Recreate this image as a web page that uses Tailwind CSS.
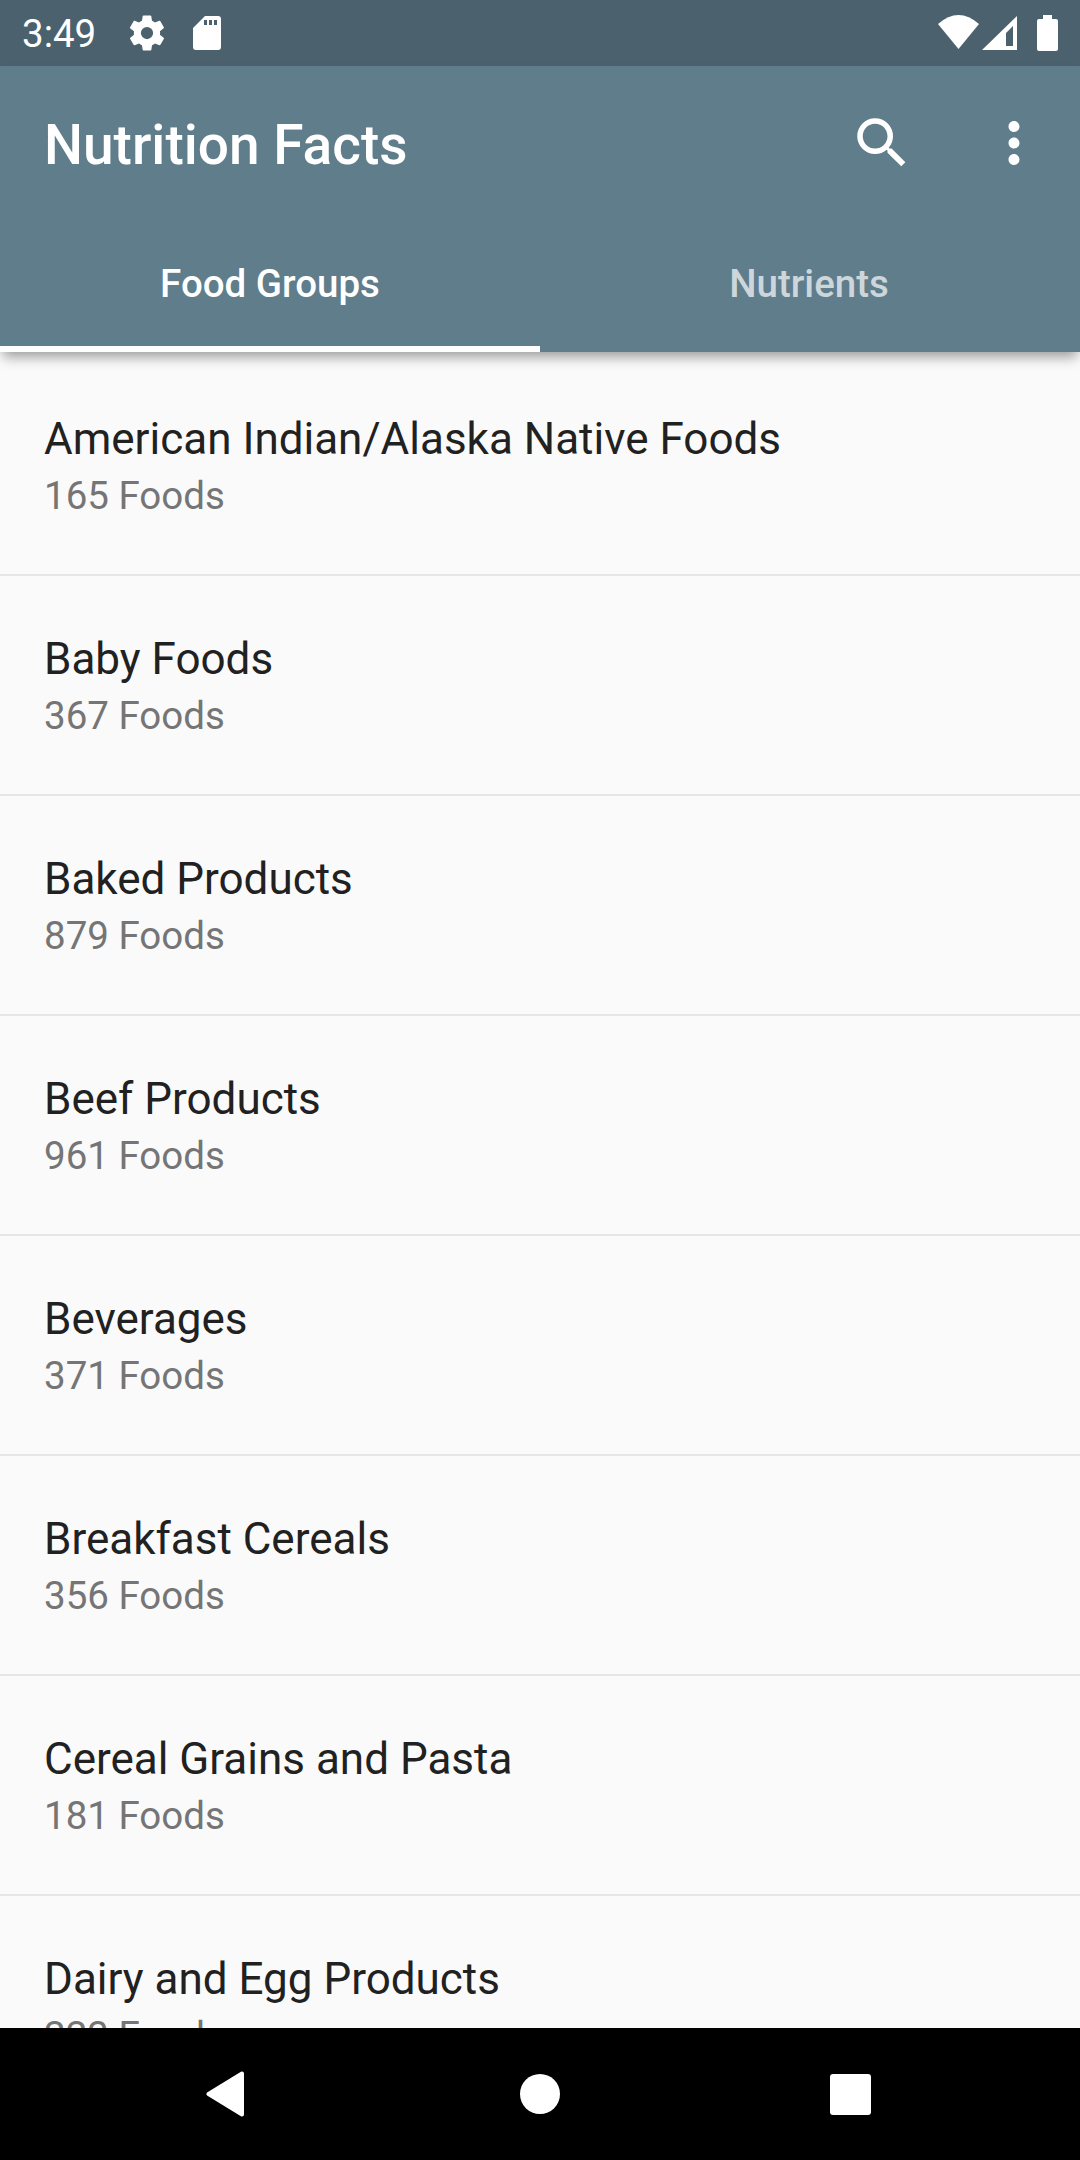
<!DOCTYPE html>
<html lang="en">
<head>
    <meta charset="UTF-8">
    <title>Nutrition Facts</title>
    <script src="https://cdn.jsdelivr.net/npm/@tailwindcss/browser@4"></script>
</head>
<body class="w-[1080px] h-[2160px] overflow-hidden bg-[#fafafa] font-['Roboto',sans-serif] flex flex-col">
    <!-- status bar -->
    <div class="h-[66px] bg-[#4b626e] flex items-center justify-between pl-[22px] pr-[22px] text-white shrink-0">
        <div class="flex items-center">
            <span class="text-[38.500px] leading-none w-[104px] mt-[2px]">3:49</span>
            <svg class="w-[42px] h-[42px]" viewBox="0 0 24 24" fill="#fff"><path d="M19.4 13c.04-.32.07-.66.07-1s-.03-.68-.07-1l2.1-1.65c.2-.15.25-.42.13-.64l-2-3.46c-.12-.22-.39-.3-.61-.22l-2.49 1c-.52-.4-1.08-.73-1.69-.98l-.38-2.65A.49.49 0 0 0 14 2h-4c-.25 0-.46.18-.49.42l-.38 2.65c-.61.25-1.17.59-1.69.98l-2.49-1c-.23-.09-.49 0-.61.22l-2 3.46c-.13.22-.07.49.12.64L4.57 11c-.04.32-.07.66-.07 1s.03.68.07 1l-2.11 1.65c-.19.15-.24.42-.12.64l2 3.46c.12.22.39.3.61.22l2.49-1c.52.4 1.08.73 1.69.98l.38 2.65c.03.24.24.42.49.42h4c.25 0 .46-.18.49-.42l.38-2.65c.61-.25 1.17-.59 1.69-.98l2.49 1c.23.09.49 0 .61-.22l2-3.46c.12-.22.07-.49-.12-.64L19.4 13zM12 15.500a3.500 3.500 0 1 1 0-7 3.500 3.500 0 0 1 0 7z"/></svg>
            <svg class="w-[28px] h-[34px] ml-[25px]" viewBox="0 0 28 34" fill="#fff" fill-rule="evenodd"><path d="M12 0H25a3 3 0 0 1 3 3V31a3 3 0 0 1-3 3H3a3 3 0 0 1-3-3V12zM11 4v5h3V4zM16 4v5h3V4zM21 4v5h3V4z"/></svg>
        </div>
        <div class="flex items-center">
            <svg class="w-[41px] h-[34px] mb-[2px]" viewBox="0 0 41 34" fill="#fff"><path d="M0 9Q20.500-9 41 9L20.500 34z"/></svg>
            <svg class="w-[35px] h-[34px] ml-[3px]" viewBox="0 0 35 34" fill="#fff" fill-rule="evenodd"><path d="M0 34 35 0V34zM31 10 24 17V30H31z"/></svg>
            <svg class="w-[21px] h-[36px] ml-[20px]" viewBox="0 0 21 36" fill="#fff"><path d="M6 0h9v4h4a2 2 0 0 1 2 2v28a2 2 0 0 1-2 2H2a2 2 0 0 1-2-2V6a2 2 0 0 1 2-2h4z"/></svg>
        </div>
    </div>

    <!-- app bar -->
    <div class="h-[286px] bg-[#607d8b] shrink-0 relative z-10 shadow-[0_8px_12px_-3px_rgba(0,0,0,0.38)] flex flex-col">
        <div class="h-[154px] flex items-center pl-[44px]">
            <h1 class="text-[55px] leading-none font-medium text-white flex-1 mt-[4px]">Nutrition Facts</h1>
            <svg class="w-[66px] h-[66px] mr-[66px]" viewBox="0 0 24 24" fill="#fff"><path d="M15.500 14h-.79l-.28-.27A6.470 6.470 0 0 0 16 9.500 6.500 6.500 0 1 0 9.500 16c1.610 0 3.090-.59 4.230-1.570l.27.28v.79l5 4.990L20.490 19l-4.990-5zm-6 0C7.010 14 5 11.990 5 9.500S7.010 5 9.500 5 14 7.010 14 9.500 11.990 14 9.500 14z"/></svg>
            <svg class="w-[66px] h-[66px] mr-[33px]" viewBox="0 0 24 24" fill="#fff"><path d="M12 8c1.100 0 2-.9 2-2s-.9-2-2-2-2 .9-2 2 .9 2 2 2zm0 2c-1.100 0-2 .9-2 2s.9 2 2 2 2-.9 2-2-.9-2-2-2zm0 6c-1.100 0-2 .9-2 2s.9 2 2 2 2-.9 2-2-.9-2-2-2z"/></svg>
        </div>
        <div class="flex-1 flex">
            <div class="w-[540px] flex items-center justify-center border-b-[6px] border-white text-white text-[38.500px] font-medium pt-[2px]">Food Groups</div>
            <div class="w-[540px] flex items-center justify-center border-b-[6px] border-transparent text-white/70 text-[38.500px] font-medium pt-[2px] pr-[2px]">Nutrients</div>
        </div>
    </div>

    <!-- list -->
    <div class="flex-1 overflow-hidden pt-[4px]">
        <div class="h-[220px] border-b-2 border-[#e6e6e6] pl-[44px] pt-[57px]">
            <div class="text-[44px] leading-[52px] text-[#212121]">American Indian/Alaska Native Foods</div>
            <div class="text-[38.500px] leading-[48px] text-[#757575] mt-[7px]">165 Foods</div>
        </div>
        <div class="h-[220px] border-b-2 border-[#e6e6e6] pl-[44px] pt-[57px]">
            <div class="text-[44px] leading-[52px] text-[#212121]">Baby Foods</div>
            <div class="text-[38.500px] leading-[48px] text-[#757575] mt-[7px]">367 Foods</div>
        </div>
        <div class="h-[220px] border-b-2 border-[#e6e6e6] pl-[44px] pt-[57px]">
            <div class="text-[44px] leading-[52px] text-[#212121]">Baked Products</div>
            <div class="text-[38.500px] leading-[48px] text-[#757575] mt-[7px]">879 Foods</div>
        </div>
        <div class="h-[220px] border-b-2 border-[#e6e6e6] pl-[44px] pt-[57px]">
            <div class="text-[44px] leading-[52px] text-[#212121]">Beef Products</div>
            <div class="text-[38.500px] leading-[48px] text-[#757575] mt-[7px]">961 Foods</div>
        </div>
        <div class="h-[220px] border-b-2 border-[#e6e6e6] pl-[44px] pt-[57px]">
            <div class="text-[44px] leading-[52px] text-[#212121]">Beverages</div>
            <div class="text-[38.500px] leading-[48px] text-[#757575] mt-[7px]">371 Foods</div>
        </div>
        <div class="h-[220px] border-b-2 border-[#e6e6e6] pl-[44px] pt-[57px]">
            <div class="text-[44px] leading-[52px] text-[#212121]">Breakfast Cereals</div>
            <div class="text-[38.500px] leading-[48px] text-[#757575] mt-[7px]">356 Foods</div>
        </div>
        <div class="h-[220px] border-b-2 border-[#e6e6e6] pl-[44px] pt-[57px]">
            <div class="text-[44px] leading-[52px] text-[#212121]">Cereal Grains and Pasta</div>
            <div class="text-[38.500px] leading-[48px] text-[#757575] mt-[7px]">181 Foods</div>
        </div>
        <div class="h-[220px] border-b-2 border-[#e6e6e6] pl-[44px] pt-[57px]">
            <div class="text-[44px] leading-[52px] text-[#212121]">Dairy and Egg Products</div>
            <div class="text-[38.500px] leading-[48px] text-[#757575] mt-[7px]">223 Foods</div>
        </div>
    </div>

    <!-- nav bar -->
    <div class="h-[132px] bg-black shrink-0 flex items-center pl-[206px] relative z-10">
        <svg class="w-[39px] h-[46px]" viewBox="0 0 39 46" fill="#fff"><path d="M36 2.500V43.500L2.500 23z" stroke="#fff" stroke-width="4" stroke-linejoin="round"/></svg>
        <div class="w-[40px] h-[40px] rounded-full bg-white ml-[275px]"></div>
        <div class="w-[41px] h-[41px] rounded-[3px] bg-white ml-[270px]"></div>
    </div>
</body>
</html>
